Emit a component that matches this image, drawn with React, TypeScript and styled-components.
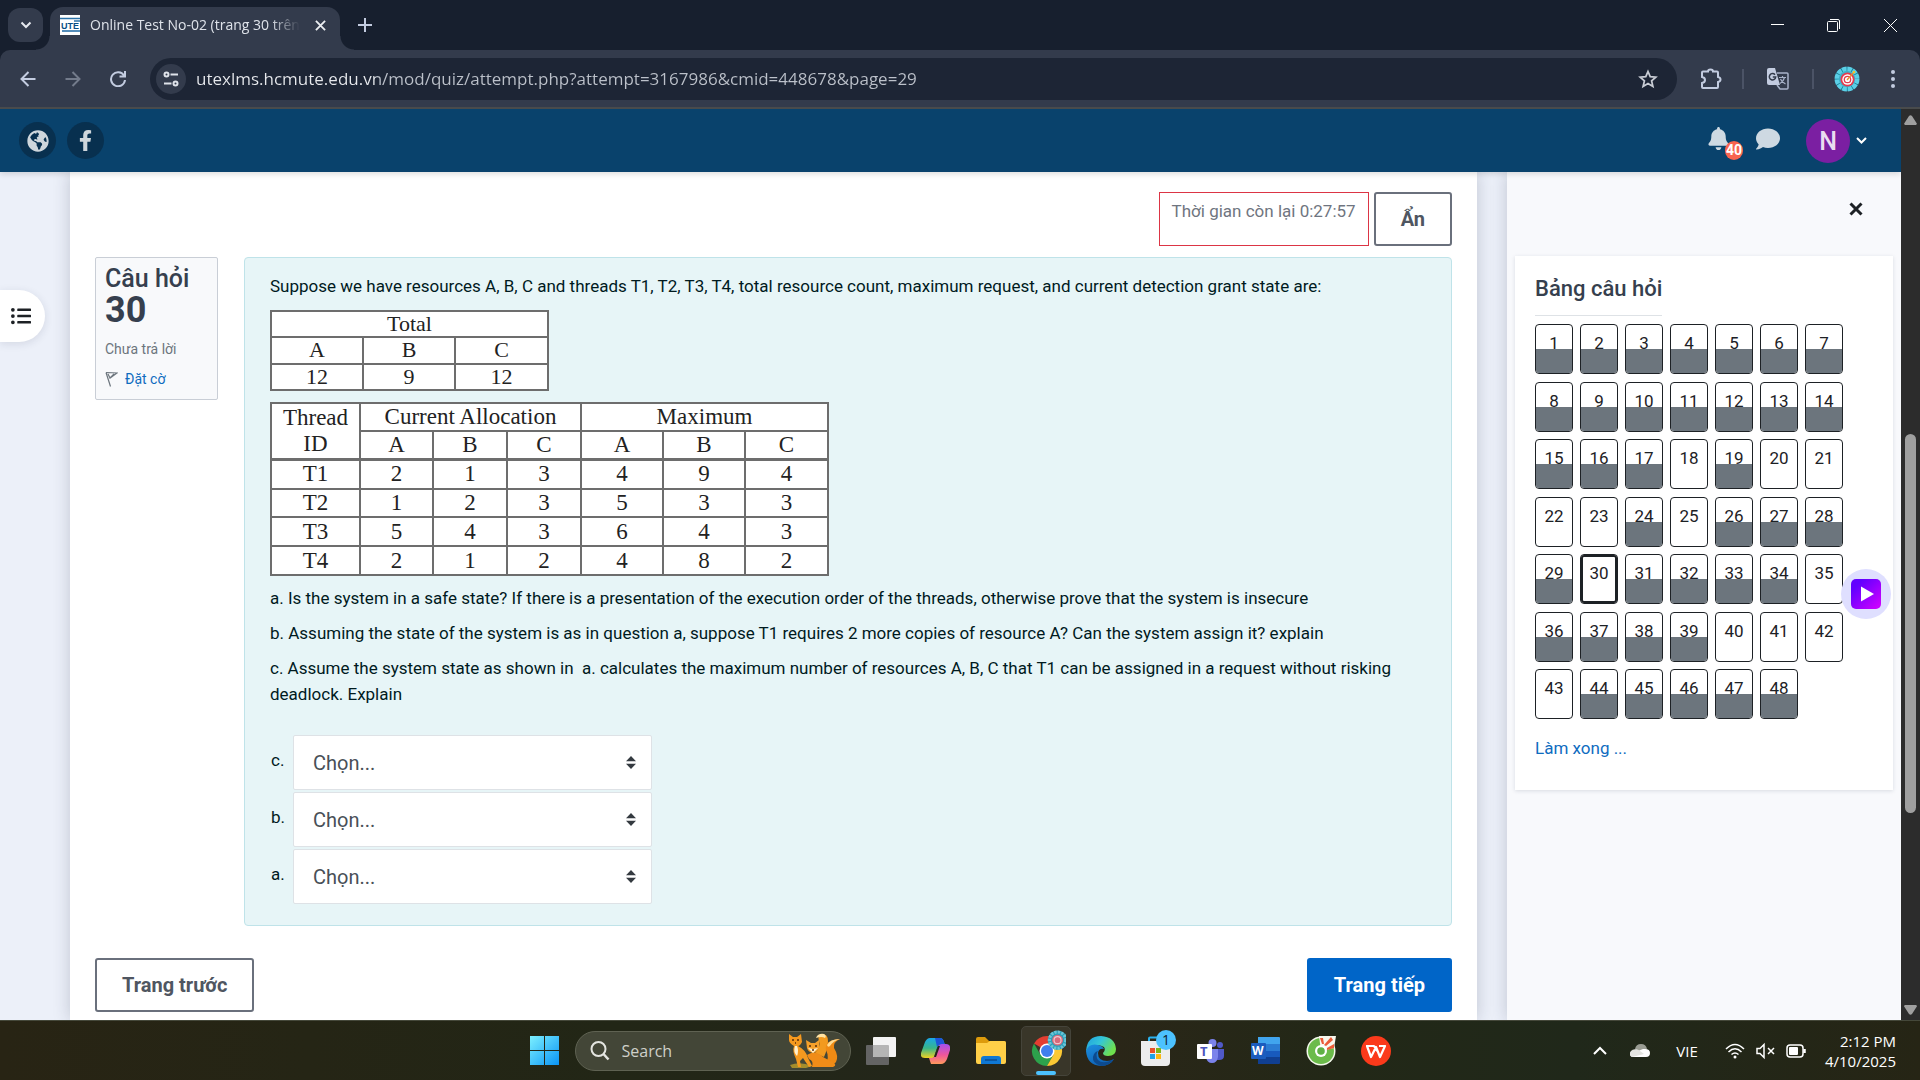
import React from "react";
import styled, { createGlobalStyle, css } from "styled-components";
import {
  FaBell,
  FaComment,
  FaFacebookF,
  FaGlobeAmericas,
  FaListUl,
} from "react-icons/fa";

const uiFont = `"Open Sans", "Noto Sans", sans-serif`;
const pageFont = `Roboto, "Noto Sans", sans-serif`;

const GlobalStyle = createGlobalStyle`
  *, *::before, *::after { box-sizing: border-box; }
  body { margin: 0; overflow: hidden; }
  button, input, select { font-family: inherit; }
  a { text-decoration: none; }
  svg { display: block; flex: none; }
  h2, h3, p { margin: 0; font-weight: 400; }
`;

const Desktop = styled.div`
  display: flex;
  flex-direction: column;
  height: 100vh;
  background: #171f2e;
  font-family: ${uiFont};
`;

/* ---------- browser chrome ---------- */

const TabStrip = styled.header`
  display: flex;
  align-items: center;
  height: 50px;
  padding-left: 8px;
  background: #171f2e;
  color: #dfe3ea;
`;

const TabSearch = styled.button`
  display: grid;
  place-items: center;
  width: 35px;
  height: 34px;
  border: 0;
  border-radius: 12px;
  background: #333b4c;
  color: #e6e9ef;
`;

const Tab = styled.div`
  position: relative;
  display: flex;
  align-items: center;
  align-self: flex-end;
  width: 290px;
  height: 43px;
  margin-left: 7px;
  padding: 0 11px 7px 10px;
  border-radius: 13px 13px 0 0;
  background: #333b4c;

  &::before,
  &::after {
    content: "";
    position: absolute;
    bottom: 0;
    width: 14px;
    height: 14px;
  }
  &::before {
    left: -14px;
    background: radial-gradient(circle at 0 0, transparent 13px, #333b4c 14px);
  }
  &::after {
    right: -14px;
    background: radial-gradient(circle at 100% 0, transparent 13px, #333b4c 14px);
  }
`;

const TabTitle = styled.span`
  flex: 1;
  margin-left: 10px;
  overflow: hidden;
  white-space: nowrap;
  font-size: 14px;
  line-height: 20px;
  mask-image: linear-gradient(90deg, #000 180px, transparent 210px);
`;

const ChromeButton = styled.button<{ $w?: number; $dim?: boolean }>`
  display: grid;
  place-items: center;
  flex: none;
  width: ${(p) => p.$w ?? 45}px;
  height: 36px;
  padding: 0;
  border: 0;
  background: none;
  color: ${(p) => (p.$dim ? "#737b8b" : "#c3cce0")};
`;

const WindowButtons = styled.div`
  display: flex;
  margin-left: auto;
`;

const Toolbar = styled.nav`
  display: flex;
  align-items: center;
  height: 59px;
  padding: 0 5px;
  border-bottom: 2px solid #494b4c;
  border-radius: 10px 10px 0 0;
  background: #333b4c;
`;

const AddressBar = styled.label`
  display: flex;
  align-items: center;
  flex: 1;
  height: 42px;
  margin: 0 11px 0 10px;
  padding: 0 8px 0 6px;
  border-radius: 21px;
  background: #1d2535;
  color: #c9cdd5;
`;

const SiteInfo = styled.button`
  display: grid;
  place-items: center;
  width: 30px;
  height: 30px;
  padding: 0;
  border: 0;
  border-radius: 50%;
  background: #333b4c;
  color: #dfe3ea;
`;

const AddressInput = styled.input`
  flex: 1;
  margin-left: 10px;
  padding: 0;
  border: 0;
  outline: 0;
  color: #dfe3ea;
  background: linear-gradient(90deg, #e8eaee 180px, #bcc1ca 180px) text;
  -webkit-text-fill-color: transparent;
  font-size: 17px;
  line-height: 26px;
`;

const Divider = styled.span`
  width: 2px;
  height: 20px;
  margin: 0 9px;
  background: #4b5366;
`;

/* ---------- viewport ---------- */

const Viewport = styled.div`
  display: flex;
  flex: 1;
  min-height: 0;
  background: #2c2c2c;
`;

const Page = styled.div`
  position: relative;
  display: flex;
  flex-direction: column;
  flex: 1;
  min-width: 0;
  overflow: hidden;
  background: #ecf0f9;
  font-family: ${pageFont};
  font-size: 17px;
  line-height: 26px;
`;

const Scrollbar = styled.div`
  display: flex;
  flex-direction: column;
  align-items: center;
  width: 19px;
  padding: 6px 0 5px;
`;

const ScrollGap = styled.span<{ $grow: number }>`
  flex: ${(p) => p.$grow} 0 0;
`;

const ScrollThumb = styled.span`
  flex: 379 0 0;
  width: 11px;
  border-radius: 6px;
  background: #9f9f9f;
`;

const SiteHeader = styled.header`
  z-index: 2;
  display: flex;
  align-items: center;
  height: 63px;
  flex: none;
  padding: 0 34px 0 19px;
  background: #09426c;
  box-shadow: 0 2px 6px rgba(0, 0, 0, 0.14);
`;

const RoundLink = styled.a`
  display: grid;
  place-items: center;
  width: 37px;
  height: 37px;
  margin-right: 11px;
  border-radius: 50%;
  background: #08304f;
  color: #ced6dc;
`;

const HeaderTools = styled.div`
  display: flex;
  align-items: center;
  margin-left: auto;
`;

const HeaderButton = styled.button`
  position: relative;
  padding: 0 0 4px;
  margin-right: 26px;
  border: 0;
  background: none;
  color: #ced9e2;
`;

const Badge = styled.span`
  position: absolute;
  top: 14px;
  left: 18px;
  width: 18px;
  height: 19px;
  border-radius: 10px;
  background: #f8644f;
  color: #fff;
  font-size: 14px;
  font-weight: 700;
  line-height: 19px;
  text-align: center;
`;

const Avatar = styled.button`
  display: flex;
  align-items: center;
  gap: 6px;
  padding: 0;
  border: 0;
  background: none;
  color: #fff;
`;

const AvatarCircle = styled.span`
  width: 44px;
  height: 44px;
  border-radius: 50%;
  background: #7b1fa2;
  color: #eadcf0;
  font-size: 25px;
  font-weight: 500;
  line-height: 46px;
  text-align: center;
`;

const Columns = styled.div`
  display: flex;
  flex: 1;
  min-height: 0;
`;

const Content = styled.main`
  flex: 1;
  min-width: 0;
  margin: 0 30px 0 70px;
  padding: 20px 25px;
  background: #fff;
  box-shadow: 0 0 16px rgba(30, 40, 70, 0.22);
`;

const DrawerToggle = styled.button`
  position: absolute;
  top: 181px;
  left: 0;
  display: flex;
  align-items: center;
  width: 45px;
  height: 52px;
  padding: 0 0 0 11px;
  border: 0;
  border-radius: 0 26px 26px 0;
  background: #fff;
  box-shadow: 0 2px 8px rgba(30, 40, 70, 0.12);
  color: #1d2125;
`;

const TimerRow = styled.div`
  display: flex;
  justify-content: flex-end;
  gap: 5px;
  margin-bottom: 11px;
`;

const Timer = styled.div`
  padding: 5px 12px;
  border: 1px solid #dc3545;
  color: #6f7580;
`;

const Button = styled.button<{ $primary?: boolean }>`
  height: 54px;
  padding: 0 25px;
  border: 2px solid #6a707c;
  border-radius: 3px;
  background: #fff;
  color: #4f5661;
  font-size: 20px;
  font-weight: 700;

  ${(p) =>
    p.$primary &&
    css`
      border-color: #0065c8;
      background: #0065c8;
      color: #fff;
    `}
`;

const Question = styled.section`
  display: flex;
  align-items: flex-start;
  gap: 26px;
`;

const QuestionInfo = styled.aside`
  width: 123px;
  height: 143px;
  padding: 9px;
  border: 1px solid #c9ced6;
  border-radius: 2px;
  background: #f8f9fb;
  color: #363f4e;
`;

const InfoTitle = styled.h3`
  font-size: 25px;
  font-weight: 500;
  line-height: 24px;
`;

const InfoNumber = styled.span`
  display: block;
  font-size: 36px;
  font-weight: 700;
  line-height: 38px;
`;

const InfoState = styled.div`
  margin-top: 10px;
  color: #6c757d;
  font-size: 14px;
  line-height: 20px;
`;

const FlagLink = styled.a`
  display: flex;
  align-items: center;
  gap: 7px;
  margin-top: 10px;
  color: #0f6cbf;
  font-size: 14px;
  line-height: 20px;
`;

const QuestionBody = styled.div`
  flex: 1;
  min-width: 0;
  padding: 15px 25px 21px;
  border: 1px solid #bfe3e9;
  border-radius: 4px;
  background: #e7f5f7;
  color: #001a1e;
`;

const Paragraph = styled.p`
  margin-bottom: 9px;
  white-space: pre-wrap;
`;

const DataTable = styled.table<{ $height: number; $size: number; $line: number }>`
  table-layout: fixed;
  border-collapse: collapse;
  height: ${(p) => p.$height}px;
  margin: 11px 0 9px;
  border: 2px solid #6d6d6d;
  background: #fff;
  color: #222;
  font-family: "Liberation Serif", serif;
  font-size: ${(p) => p.$size}px;
  line-height: ${(p) => p.$line}px;

  th,
  td {
    padding: 0;
    border: 2px solid #6d6d6d;
    font-weight: 400;
    text-align: center;
  }
`;

const HeadGroup = styled.thead`
  border-bottom: 3px solid #6d6d6d;
`;

const Answers = styled.div`
  display: flex;
  flex-direction: column;
  gap: 2px;
  margin: 28px 0 0 1px;
`;

const Answer = styled.label`
  display: flex;
  align-items: center;
  line-height: 20px;
`;

const AnswerKey = styled.span`
  width: 22px;
  padding-bottom: 6px;
`;

const SelectBox = styled.span`
  display: grid;
  align-items: center;
  width: 359px;

  > * {
    grid-area: 1 / 1;
  }
  > svg {
    justify-self: end;
    margin-right: 16px;
    pointer-events: none;
  }
`;

const Select = styled.select`
  appearance: none;
  width: 100%;
  height: 55px;
  padding: 0 19px;
  border: 1px solid #dee2e6;
  border-radius: 2px;
  background: #fff;
  color: #495057;
  font-size: 20px;
`;

const PageNav = styled.div`
  display: flex;
  justify-content: space-between;
  margin-top: 32px;
`;

/* ---------- right drawer ---------- */

const Drawer = styled.aside`
  display: flex;
  flex-direction: column;
  width: 394px;
  padding: 20px 8px;
  background: #f8f9fc;
  box-shadow: 0 0 16px rgba(30, 40, 70, 0.22);
`;

const DrawerClose = styled.button`
  display: grid;
  place-items: center;
  align-self: flex-end;
  width: 34px;
  height: 34px;
  margin: 0 20px 30px 0;
  padding: 0;
  border: 0;
  background: none;
  color: #1d2125;
`;

const Card = styled.section`
  padding: 20px 20px 29px;
  background: #fff;
  box-shadow: 0 1px 4px rgba(30, 40, 70, 0.14);
`;

const CardTitle = styled.h2`
  display: inline-block;
  padding-bottom: 13px;
  border-bottom: 1px solid #dee2e6;
  color: #363f4e;
  font-size: 22px;
  font-weight: 500;
  line-height: 26px;
  vertical-align: top;
`;

const QuestionGrid = styled.div`
  display: grid;
  grid-template-columns: repeat(7, 38px);
  align-content: space-between;
  column-gap: 7px;
  height: 395px;
  margin: 8px 0 16px;
`;

const QuestionCell = styled.a<{ $done: boolean; $current: boolean }>`
  position: relative;
  height: 50px;
  padding-top: 5px;
  overflow: hidden;
  border: 1px solid #1d2125;
  border-radius: 4px;
  background: #fff;
  color: #1d2125;
  text-align: center;

  ${(p) =>
    p.$current &&
    css`
      box-shadow: inset 0 0 0 2px #1d2125;
    `}
  ${(p) =>
    p.$done &&
    css`
      &::after {
        content: "";
        position: absolute;
        inset: 50% 0 0;
        background: #6c757d;
      }
    `}
`;

const FinishLink = styled.a`
  display: block;
  color: #0f6cbf;
`;

const PlayButton = styled.button`
  position: absolute;
  top: 460px;
  right: 10px;
  z-index: 3;
  display: grid;
  place-items: center;
  width: 50px;
  height: 50px;
  padding: 0;
  border: 0;
  border-radius: 50%;
  background: #dfdfff;
`;

/* ---------- taskbar ---------- */

const Taskbar = styled.footer`
  display: grid;
  grid-template-columns: 1fr auto 1fr;
  align-items: center;
  height: 60px;
  flex: none;
  border-top: 1px solid #45483a;
  background: linear-gradient(90deg, #282414, #222616 32%, #23261a 48%, #2b2618 57%, #222817 70%, #20281a 82%, #262515);
  color: #fff;
`;

const TaskItems = styled.div`
  grid-column: 2;
  display: flex;
  align-items: center;
  gap: 5px;
`;

const TaskButton = styled.button<{ $active?: boolean }>`
  position: relative;
  display: grid;
  place-items: center;
  width: 50px;
  height: 50px;
  padding: 0;
  border: 1px solid ${(p) => (p.$active ? "#45443a" : "transparent")};
  border-radius: 5px;
  background: ${(p) => (p.$active ? "#393629" : "none")};

  ${(p) =>
    p.$active &&
    css`
      &::after {
        content: "";
        position: absolute;
        bottom: 0;
        width: 20px;
        height: 4px;
        border-radius: 2px;
        background: #4cc2ff;
      }
    `}
`;

const SearchBox = styled.label`
  display: flex;
  align-items: center;
  gap: 12px;
  width: 276px;
  height: 40px;
  padding: 0 10px 0 14px;
  border: 1px solid #5f6252;
  border-radius: 20px;
  background: #434637;
`;

const SearchInput = styled.input`
  flex: 1;
  min-width: 0;
  padding: 0;
  border: 0;
  outline: 0;
  background: none;
  color: #fff;
  font-size: 16px;

  &::placeholder {
    color: #cfd0c9;
    opacity: 1;
  }
`;

const Tray = styled.div`
  grid-column: 3;
  display: flex;
  align-items: center;
  justify-content: flex-end;
  padding-right: 24px;
  font-size: 15px;
`;

const TrayItem = styled.button<{ $w: number }>`
  display: grid;
  place-items: center;
  width: ${(p) => p.$w}px;
  height: 40px;
  padding: 0;
  border: 0;
  background: none;
  color: #fff;
  font-size: 15px;
`;

const Clock = styled.time`
  width: 80px;
  line-height: 20px;
  text-align: right;
`;

/* ---------- icons ---------- */

type LineProps = { size: number; box: string; w?: number; children: React.ReactNode };

const Line = ({ size, box, w = 2, children }: LineProps) => (
  <svg
    width={size}
    height={size}
    viewBox={box}
    fill="none"
    stroke="currentColor"
    strokeWidth={w}
    aria-hidden="true"
  >
    {children}
  </svg>
);

const SchoolLogo = () => (
  <svg width="20" height="20" viewBox="0 0 20 20" aria-hidden="true">
    <rect width="20" height="20" fill="#fff" />
    <path d="M0 3.500h20M14 6h6" stroke="#2a72a8" strokeWidth="1.500" />
    <text x="1" y="14" fill="#0a4f86" fontFamily="'Liberation Sans'" fontSize="9" fontWeight="700">
      UTE
    </text>
    <path d="M2 16h18" stroke="#1b67a3" strokeWidth="1.500" />
  </svg>
);

const ProfileBadge = ({ size }: { size: number }) => (
  <svg width={size} height={size} viewBox="0 0 26 26" aria-hidden="true">
    <circle cx="13" cy="13" r="12" fill="#0f7d93" />
    <circle cx="13" cy="13" r="10" fill="none" stroke="#5ccfe6" strokeWidth="5" strokeDasharray="4.500 0.740" />
    <circle cx="13" cy="13" r="8" fill="#3fb3cc" />
    <circle cx="13.500" cy="13.500" r="7" fill="#e33b4f" />
    <circle cx="13.500" cy="13.500" r="5.200" fill="#fff" />
    <circle cx="13.500" cy="13.500" r="3.200" fill="none" stroke="#e33b4f" strokeWidth="1.300" />
    <path d="M13 14l7-8" stroke="#e8912d" strokeWidth="1.300" />
    <circle cx="20" cy="6" r="1.300" fill="#f2c431" />
  </svg>
);

const TranslateIcon = () => (
  <svg width="22" height="22" viewBox="0 0 22 22" aria-hidden="true">
    <path d="M10 5h10q1 0 1 1v14q0 1-1 1h-7l-3-4" fill="none" stroke="#a9b3c9" strokeWidth="1.500" />
    <path d="M12 9.500h7M15.500 8v1.500M17.500 9.500q-1 4-4.500 6M13.500 11q1 3 5 5" fill="none" stroke="#a9b3c9" strokeWidth="1.200" />
    <path d="M2 0h6l5 17H2q-2 0-2-2V2q0-2 2-2z" fill="#c3cce0" />
    <path d="M8 6.800A3.200 3.200 0 1 0 8.700 9H5.800" fill="none" stroke="#333b4c" strokeWidth="1.500" />
  </svg>
);

const FlagIcon = () => (
  <svg width="13" height="16" viewBox="0 0 13 16" fill="none" stroke="#6c757d" aria-hidden="true">
    <path d="M1 1.500l11 .5-7.500 5.500M1 1.500L5.500 15.500M3 3l2 4 4-4" strokeWidth="1.200" />
  </svg>
);

const CaretPair = () => (
  <svg width="10" height="13" viewBox="0 0 10 13" aria-hidden="true">
    <path d="M5 0l5 5.200H0zM5 13l5-5.200H0z" fill="#343a40" />
  </svg>
);

const WindowsIcon = () => (
  <svg width="29" height="29" viewBox="0 0 29 29" aria-hidden="true">
    <defs>
      <linearGradient id="win" x1="0" y1="0" x2="1" y2="1" gradientUnits="objectBoundingBox">
        <stop stopColor="#7cf0ff" />
        <stop offset="1" stopColor="#0a94f5" />
      </linearGradient>
    </defs>
    <path d="M0 0h14v14H0zM15 0h14v14H15zM0 15h14v14H0zM15 15h14v14H15z" fill="url(#win)" />
  </svg>
);

const FoxIcon = () => (
  <svg width="52" height="36" viewBox="0 0 52 36" aria-hidden="true">
    <path d="M2 32q10-4 22 1l-6 2H4z" fill="#a58d2c" />
    <path d="M27 20Q33 14 31 8 29 3 34 1q6 0 6 7 0 7-4 16z" fill="#f29a1f" />
    <path d="M36 1q-6-1-8 4 6-2 9 0 2-2-1-4z" fill="#ffe3a4" />
    <path d="M37 31Q42 25 38 17q-2-10 14-11-7 3-6 9 5 8 2 14-5 6-12 4z" fill="#ef8a14" />
    <path d="M52 6q-10 0-13 6 1 3 3 1 3-5 10-7z" fill="#ffdd94" />
    <path d="M19 22q8-6 16 2l9 5q6 3 1 5H24q2-6-3-8z" fill="#f08c18" />
    <path d="M1 1l4 3 4 0 4-3 1 8q-2 4-4 4 8 4 10 12l4 8-3 1-6-9-3 3 1 6h-3l-2-8Q4 18 6 13q-5-3-5-6z" fill="#f5991f" />
    <path d="M7 13q-2 6 2 10 2-5 0-10z" fill="#fff0cf" />
    <path d="M18 7l5 3h4l4-3v8q-2 4-6 5-5-1-6-5z" fill="#f5a02a" />
    <path d="M20 15l5 1 5-1-5 5z" fill="#fff0cf" />
    <path d="M4 7h2M9 7h2M21 13h2M27 13h2M7 10h1M24 17h2" stroke="#5a2c0a" strokeWidth="1.300" />
  </svg>
);

const TaskViewIcon = () => (
  <svg width="30" height="28" viewBox="0 0 30 28" aria-hidden="true">
    <rect y="8" width="23" height="20" rx="1" fill="#646464" />
    <rect x="7" width="23" height="20" rx="1" fill="#f3f3f3" />
    <path d="M7 8h15q1 0 1 1v11H8q-1 0-1-1z" fill="#b5b5b5" />
  </svg>
);

const CopilotIcon = () => (
  <svg width="29" height="26" viewBox="0 0 29 26" aria-hidden="true">
    <defs>
      <linearGradient id="cpA" x1="0" y1="0" x2="0" y2="1">
        <stop stopColor="#1aa7e8" />
        <stop offset="0.500" stopColor="#38b58a" />
        <stop offset="1" stopColor="#f7d21e" />
      </linearGradient>
      <linearGradient id="cpB" x1="0" y1="0" x2="0" y2="1">
        <stop stopColor="#a34ff0" />
        <stop offset="0.550" stopColor="#f0569a" />
        <stop offset="1" stopColor="#ff9a5c" />
      </linearGradient>
    </defs>
    <path d="M9 0h10q3 0 4 4l1 3h-5q-2 0-3 3l-3 9q-1 2-4 1H4q-5 0-4-5L4 4q2-4 5-4z" fill="url(#cpA)" />
    <path d="M14 0h5q3 0 4 4l1 3h-5q-2 0-3 2z" fill="#1c55d8" />
    <path d="M20 26H10l-2-6h3q2 0 3-3l3-8q1-3 4-3h4q5 0 4 6l-3 9q-2 5-6 5z" fill="url(#cpB)" />
    <path d="M13 19l4-11 2 0-4 11z" fill="#25261a" />
  </svg>
);

const FolderIcon = () => (
  <svg width="30" height="27" viewBox="0 0 30 27" aria-hidden="true">
    <path d="M0 2q0-2 2-2h7l4 4h15q2 0 2 2v6H0z" fill="#dd9b0c" />
    <path d="M0 6h11l3-2h14q2 0 2 2v19q0 2-2 2H2q-2 0-2-2z" fill="#ffcf48" />
    <path d="M5 27v-5q0-3 3-3h14q3 0 3 3v5z" fill="#0f78d4" />
    <path d="M9 23h12" stroke="#0b4d92" strokeWidth="1.500" />
  </svg>
);

const ChromeIcon = () => (
  <svg width="40" height="44" viewBox="-3 -1 40 44" aria-hidden="true">
    <path d="M18 21L5 13.500A15 15 0 0 1 31 13.500H18z" fill="#e33e31" />
    <path d="M5 13.500A15 15 0 0 0 18 36l6.500-11.300L11.500 24.700z" fill="#2da24c" />
    <path d="M18 36A15 15 0 0 0 31 13.500H18l6.500 11.200z" fill="#fcc934" />
    <circle cx="18" cy="21" r="7.500" fill="#fff" />
    <circle cx="18" cy="21" r="6" fill="#3f7fee" />
    <g transform="translate(18.400 0) scale(.78)">
      <circle cx="13" cy="13" r="12.500" fill="#2a9fb8" />
      <circle cx="13" cy="13" r="10.500" fill="none" stroke="#6bc5d6" strokeWidth="4" strokeDasharray="3 1.500" />
      <circle cx="13" cy="13" r="7" fill="#d9697b" />
      <circle cx="13" cy="13" r="4.500" fill="none" stroke="#f0c8cd" strokeWidth="1.500" />
    </g>
  </svg>
);

const EdgeIcon = () => (
  <svg width="30" height="30" viewBox="0 0 30 30" aria-hidden="true">
    <defs>
      <linearGradient id="edgeTop" x1="0" y1="0" x2="1" y2="0.500">
        <stop stopColor="#1f9ee0" />
        <stop offset="0.500" stopColor="#34c6d8" />
        <stop offset="1" stopColor="#6fe04e" />
      </linearGradient>
      <linearGradient id="edgeLow" x1="0" y1="0" x2="0.500" y2="1">
        <stop stopColor="#1c8fe0" />
        <stop offset="1" stopColor="#0f62b5" />
      </linearGradient>
    </defs>
    <path d="M0 15Q1 0 15 0q14 1 15 13 0 7-8 7-5 0-5-3 3-3 1-6-8-5-18 4z" fill="url(#edgeTop)" />
    <path d="M0 15q3-8 12-6 5 1 6 4-5-1-6 4 0 8 9 8 4 0 7-2-4 7-13 7Q1 29 0 15z" fill="url(#edgeLow)" />
    <path d="M12 15q-3 4 0 9 5 5 16-1-4 7-13 7-9-3-8-9 1-5 5-6z" fill="#0d4a8e" />
  </svg>
);

const StoreIcon = () => (
  <svg width="40" height="44" viewBox="-1 -3 40 44" aria-hidden="true">
    <path d="M12 9V6.500q0-1 1-1h10" fill="none" stroke="#2ab2ee" strokeWidth="2" />
    <path d="M4 9h29v21q0 4-4 4H8q-4 0-4-4z" fill="#ececec" />
    <path d="M13 16h5v5h-5z" fill="#e8502a" />
    <path d="M19 16h5v5h-5z" fill="#7cb518" />
    <path d="M13 22h5v5h-5z" fill="#1da1e8" />
    <path d="M19 22h5v5h-5z" fill="#fbb813" />
    <circle cx="29" cy="8" r="10" fill="#4cc2ff" />
    <text x="25" y="13" fill="#10242f" fontFamily="'Open Sans'" fontSize="14">
      1
    </text>
  </svg>
);

const TeamsIcon = () => (
  <svg width="28" height="24" viewBox="0 0 28 24" aria-hidden="true">
    <circle cx="23" cy="6" r="3" fill="#5059c9" />
    <path d="M18 10h9v7q0 4-5 4h-4z" fill="#5059c9" />
    <circle cx="15.500" cy="4" r="4" fill="#7b83eb" />
    <path d="M11 10h10v8q-1 6-6 6t-6-6z" fill="#7b83eb" />
    <rect y="5" width="15" height="15" rx="1" fill="#fff" />
    <text x="3" y="17" fill="#4b53bc" fontFamily="'Open Sans'" fontSize="13" fontWeight="700">
      T
    </text>
  </svg>
);

const WordIcon = () => (
  <svg width="29" height="27" viewBox="0 0 29 27" aria-hidden="true">
    <path d="M7 0h21q1 0 1 1v6H7z" fill="#41a5ee" />
    <path d="M7 7h22v7H7z" fill="#2b7cd3" />
    <path d="M7 14h22v6H7z" fill="#185abd" />
    <path d="M7 20h22v6q0 1-1 1H7z" fill="#103f91" />
    <rect y="6" width="15" height="16" rx="1" fill="#1b5cbe" />
    <text x="1" y="18" fill="#fff" fontFamily="'Open Sans'" fontSize="12" fontWeight="700">
      W
    </text>
  </svg>
);

const CocCocIcon = () => (
  <svg width="30" height="30" viewBox="0 0 30 30" aria-hidden="true">
    <circle cx="15" cy="15" r="14.500" fill="#f4f8ec" />
    <circle cx="15" cy="15" r="13" fill="#6bbb4a" />
    <path d="M15 15L13 0h17l-2 12z" fill="#f9f7ee" />
    <path d="M14 2l2 6 2 0-1-6zM25 1l-7 8 2 1 7-6zM28 8l-7 4 0 2 7-2z" fill="#ec5b38" />
    <circle cx="15" cy="15" r="6" fill="#fff" />
    <circle cx="15" cy="15" r="3.800" fill="#5fb146" />
  </svg>
);

const WpsIcon = () => (
  <svg width="30" height="30" viewBox="0 0 30 30" aria-hidden="true">
    <circle cx="15" cy="15" r="15" fill="#fb3a1b" />
    <path d="M5 10h8l3 5M6 10l4 11 5-10 4 10 5-11h-6" fill="none" stroke="#fff" strokeWidth="2.200" strokeLinejoin="round" />
  </svg>
);

/* ---------- data ---------- */

const unanswered = new Set([18, 20, 21, 22, 23, 25, 30, 35, 40, 41, 42, 43]);
const questions = Array.from({ length: 48 }, (_, i) => i + 1);
const threads: [string, number[]][] = [
  ["T1", [2, 1, 3, 4, 9, 4]],
  ["T2", [1, 2, 3, 5, 3, 3]],
  ["T3", [5, 4, 3, 6, 4, 3]],
  ["T4", [2, 1, 2, 4, 8, 2]],
];
const threadColumns = [89, 73, 74, 74, 82, 82, 83];

const BrowserChrome = () => (
  <>
    <TabStrip>
      <TabSearch aria-label="Search tabs">
        <Line size={12} box="0 0 12 12" w={2}>
          <path d="M1.500 3.500L6 8l4.500-4.500" />
        </Line>
      </TabSearch>
      <Tab>
        <SchoolLogo />
        <TabTitle>Online Test No-02 (trang 30 trên</TabTitle>
        <ChromeButton $w={18} aria-label="Close tab">
          <Line size={11} box="0 0 12 12">
            <path d="M1 1l10 10M11 1L1 11" stroke="#eceef2" />
          </Line>
        </ChromeButton>
      </Tab>
      <ChromeButton $w={50} aria-label="New tab">
        <Line size={14} box="0 0 14 14">
          <path d="M7 0v14M0 7h14" />
        </Line>
      </ChromeButton>
      <WindowButtons>
        <ChromeButton $w={56} aria-label="Minimize">
          <Line size={13} box="0 0 13 13" w={1}>
            <path d="M0 5.500h13" stroke="#fff" />
          </Line>
        </ChromeButton>
        <ChromeButton $w={56} aria-label="Restore">
          <Line size={13} box="0 0 13 13" w={1}>
            <path d="M.5 3.500q0-1 1-1h8q1 0 1 1v8q0 1-1 1h-8q-1 0-1-1zM3 .5h8q1.500 0 1.500 1.500v8" stroke="#fff" />
          </Line>
        </ChromeButton>
        <ChromeButton $w={59} aria-label="Close">
          <Line size={13} box="0 0 13 13" w={1}>
            <path d="M0 0l13 13M13 0L0 13" stroke="#fff" />
          </Line>
        </ChromeButton>
      </WindowButtons>
    </TabStrip>
    <Toolbar>
      <ChromeButton aria-label="Back">
        <Line size={16} box="0 0 16 16">
          <path d="M15.500 8H1.500M8.500 1L1.500 8l7 7" />
        </Line>
      </ChromeButton>
      <ChromeButton $dim aria-label="Forward">
        <Line size={16} box="0 0 16 16">
          <path d="M.5 8h14M7.500 1l7 7-7 7" />
        </Line>
      </ChromeButton>
      <ChromeButton aria-label="Reload">
        <Line size={16} box="0 0 16 16">
          <path d="M14 4.500A7 7 0 1 0 15 9M15 0v5.500H9.500" />
        </Line>
      </ChromeButton>
      <AddressBar>
        <SiteInfo aria-label="Site information">
          <Line size={16} box="0 0 16 16">
            <circle cx="3.500" cy="3.500" r="2" />
            <path d="M7.500 3.500H15M1 12.500h7.500" />
            <circle cx="12.500" cy="12.500" r="2" />
          </Line>
        </SiteInfo>
        <AddressInput
          aria-label="Address"
          defaultValue="utexlms.hcmute.edu.vn/mod/quiz/attempt.php?attempt=3167986&cmid=448678&page=29"
        />
        <ChromeButton $w={42} aria-label="Bookmark">
          <Line size={20} box="0 0 20 20" w={1.75}>
            <path d="M10 2.500l2.200 5.200 5.600.5-4.200 3.700 1.300 5.500L10 14.500l-4.900 2.900 1.300-5.500L2.200 8.200l5.600-.5z" stroke="#c9cdd5" />
          </Line>
        </ChromeButton>
      </AddressBar>
      <ChromeButton aria-label="Extensions">
        <Line size={22} box="0 0 22 22">
          <path d="M3 3.500h5q0-2 2.500-2t2.500 2h4q1 0 1 1V9q2.500.5 2.500 2.500T18 14v5q0 1-1 1H3q-1 0-1-1v-4q3-.5 3-3T2 9V4.500q0-1 1-1z" />
        </Line>
      </ChromeButton>
      <Divider />
      <ChromeButton $w={50} aria-label="Translate">
        <TranslateIcon />
      </ChromeButton>
      <Divider />
      <ChromeButton $w={48} aria-label="Profile">
        <ProfileBadge size={26} />
      </ChromeButton>
      <ChromeButton $w={44} aria-label="Menu">
        <Line size={20} box="0 0 20 20" w={0}>
          <g fill="currentColor">
            <circle cx="10" cy="3" r="2" />
            <circle cx="10" cy="10" r="2" />
            <circle cx="10" cy="17" r="2" />
          </g>
        </Line>
      </ChromeButton>
    </Toolbar>
  </>
);

const Header = () => (
  <SiteHeader>
    <RoundLink href="#" aria-label="Website">
      <FaGlobeAmericas size={22} />
    </RoundLink>
    <RoundLink href="#" aria-label="Facebook">
      <FaFacebookF size={21} />
    </RoundLink>
    <HeaderTools>
      <HeaderButton aria-label="Notifications">
        <FaBell size={23} />
        <Badge>40</Badge>
      </HeaderButton>
      <HeaderButton aria-label="Messages">
        <FaComment size={24} />
      </HeaderButton>
      <Avatar aria-label="User menu">
        <AvatarCircle>N</AvatarCircle>
        <Line size={11} box="0 0 11 11">
          <path d="M1 3l4.500 4.500L10 3" />
        </Line>
      </Avatar>
    </HeaderTools>
  </SiteHeader>
);

const TotalTable = () => (
  <DataTable $height={81} $size={22} $line={24}>
    <colgroup>
      <col width="92" />
      <col width="92" />
      <col width="93" />
    </colgroup>
    <tbody>
      <tr>
        <th colSpan={3}>Total</th>
      </tr>
      <tr>
        <th>A</th>
        <th>B</th>
        <th>C</th>
      </tr>
      <tr>
        <td>12</td>
        <td>9</td>
        <td>12</td>
      </tr>
    </tbody>
  </DataTable>
);

const ThreadTable = () => (
  <DataTable $height={174} $size={23} $line={26}>
    <colgroup>
      {threadColumns.map((w, i) => (
        <col key={i} width={w} />
      ))}
    </colgroup>
    <HeadGroup>
      <tr>
        <th rowSpan={2}>
          Thread
          <br />
          ID
        </th>
        <th colSpan={3}>Current Allocation</th>
        <th colSpan={3}>Maximum</th>
      </tr>
      <tr>
        {["A", "B", "C", "A", "B", "C"].map((n, i) => (
          <th key={i}>{n}</th>
        ))}
      </tr>
    </HeadGroup>
    <tbody>
      {threads.map(([name, values]) => (
        <tr key={name}>
          <th>{name}</th>
          {values.map((v, i) => (
            <td key={i}>{v}</td>
          ))}
        </tr>
      ))}
    </tbody>
  </DataTable>
);

const Quiz = () => (
  <Content>
    <TimerRow>
      <Timer>Thời gian còn lại 0:27:57</Timer>
      <Button>Ẩn</Button>
    </TimerRow>
    <Question>
      <QuestionInfo>
        <InfoTitle>
          Câu hỏi <InfoNumber>30</InfoNumber>
        </InfoTitle>
        <InfoState>Chưa trả lời</InfoState>
        <FlagLink href="#">
          <FlagIcon />
          Đặt cờ
        </FlagLink>
      </QuestionInfo>
      <QuestionBody>
        <p>
          Suppose we have resources A, B, C and threads T1, T2, T3, T4, total resource count, maximum request, and
          current detection grant state are:
        </p>
        <TotalTable />
        <ThreadTable />
        <Paragraph>
          a. Is the system in a safe state? If there is a presentation of the execution order of the threads, otherwise
          prove that the system is insecure
        </Paragraph>
        <Paragraph>
          b. Assuming the state of the system is as in question a, suppose T1 requires 2 more copies of resource A? Can
          the system assign it? explain
        </Paragraph>
        <Paragraph>
          {"c. Assume the system state as shown in  a. calculates the maximum number of resources A, B, C that T1 can be assigned in a request without risking deadlock. Explain"}
        </Paragraph>
        <Answers>
          {["c.", "b.", "a."].map((key) => (
            <Answer key={key}>
              <AnswerKey>{key}</AnswerKey>
              <SelectBox>
                <Select>
                  <option>Chọn...</option>
                </Select>
                <CaretPair />
              </SelectBox>
            </Answer>
          ))}
        </Answers>
      </QuestionBody>
    </Question>
    <PageNav>
      <Button>Trang trước</Button>
      <Button $primary>Trang tiếp</Button>
    </PageNav>
  </Content>
);

const NavigationDrawer = () => (
  <Drawer>
    <DrawerClose aria-label="Close drawer">
      <Line size={14} box="0 0 14 14" w={3}>
        <path d="M1.500 1.500l11 11M12.500 1.500l-11 11" />
      </Line>
    </DrawerClose>
    <Card>
      <CardTitle>Bảng câu hỏi</CardTitle>
      <QuestionGrid>
        {questions.map((n) => (
          <QuestionCell key={n} href="#" $done={!unanswered.has(n)} $current={n === 30}>
            {n}
          </QuestionCell>
        ))}
      </QuestionGrid>
      <FinishLink href="#">Làm xong ...</FinishLink>
    </Card>
  </Drawer>
);

const SystemTaskbar = () => (
  <Taskbar>
    <TaskItems>
      <TaskButton aria-label="Start">
        <WindowsIcon />
      </TaskButton>
      <SearchBox>
        <Line size={20} box="0 0 20 20">
          <circle cx="8.500" cy="8" r="7" stroke="#e4e5e0" />
          <path d="M13.500 13l5 5.500" stroke="#e4e5e0" strokeWidth="2.500" />
        </Line>
        <SearchInput aria-label="Search" placeholder="Search" />
        <FoxIcon />
      </SearchBox>
      <TaskButton aria-label="Task view">
        <TaskViewIcon />
      </TaskButton>
      <TaskButton aria-label="Copilot">
        <CopilotIcon />
      </TaskButton>
      <TaskButton aria-label="File Explorer">
        <FolderIcon />
      </TaskButton>
      <TaskButton $active aria-label="Chrome">
        <ChromeIcon />
      </TaskButton>
      <TaskButton aria-label="Edge">
        <EdgeIcon />
      </TaskButton>
      <TaskButton aria-label="Store">
        <StoreIcon />
      </TaskButton>
      <TaskButton aria-label="Teams">
        <TeamsIcon />
      </TaskButton>
      <TaskButton aria-label="Word">
        <WordIcon />
      </TaskButton>
      <TaskButton aria-label="Cốc Cốc">
        <CocCocIcon />
      </TaskButton>
      <TaskButton aria-label="WPS Office">
        <WpsIcon />
      </TaskButton>
    </TaskItems>
    <Tray>
      <TrayItem $w={40} aria-label="Hidden icons">
        <Line size={14} box="0 0 14 14">
          <path d="M1 10l6-6 6 6" />
        </Line>
      </TrayItem>
      <TrayItem $w={40} aria-label="OneDrive">
        <svg width="20" height="14" viewBox="0 0 20 14" aria-hidden="true">
          <path d="M5 5q1-5 6-5 5 0 6 5l-5 3-8 1-3-1q1-3 4-3z" fill="#9a9c93" />
          <path d="M3 13q-3 0-3-3t4-4l4 1 5-2h2q5 0 5 4t-4 4z" fill="#fff" />
          <path d="M4 6q3-2 6 1l4 3-12 3q-2-1-2-3 0-4 4-4z" fill="#e3e4e0" />
        </svg>
      </TrayItem>
      <TrayItem $w={54}>VIE</TrayItem>
      <TrayItem $w={42} aria-label="Wi-Fi">
        <Line size={20} box="0 0 20 20" w={1.5}>
          <path d="M1 8q9-9 18 0M3.500 11q6.500-6.500 13 0M6.500 13.500q3.500-3 7 0" />
          <circle cx="10" cy="16" r="1.500" fill="currentColor" stroke="none" />
        </Line>
      </TrayItem>
      <TrayItem $w={20} aria-label="Volume muted">
        <Line size={20} box="0 0 20 20" w={1.5}>
          <path d="M1 7.500h3l4-4v13l-4-4H1zM12 7l6 6M18 7l-6 6" />
        </Line>
      </TrayItem>
      <TrayItem $w={40} aria-label="Battery">
        <Line size={20} box="0 0 20 20" w={1.5}>
          <rect x="1" y="4" width="16" height="12" rx="3" />
          <rect x="3" y="6" width="9" height="8" rx="1" fill="currentColor" stroke="none" />
          <path d="M18.500 8v4" strokeWidth="2.500" />
        </Line>
      </TrayItem>
      <Clock>
        2:12 PM
        <br />
        4/10/2025
      </Clock>
    </Tray>
  </Taskbar>
);

const ScrollArrow = ({ down }: { down?: boolean }) => (
  <svg width="13" height="10" viewBox="0 0 13 10" aria-hidden="true">
    <path
      d={down ? "M1 0h11q1.500 1 .5 2L8 9q-1.500 1.500-3 0L.5 2Q-.5 1 1 0z" : "M1 10h11q1.500-1 .5-2L8 1q-1.500-1.500-3 0L.5 8q-1 1 .5 2z"}
      fill="#9f9f9f"
    />
  </svg>
);

export default function App() {
  return (
    <Desktop>
      <GlobalStyle />
      <BrowserChrome />
      <Viewport>
        <Page>
          <Header />
          <Columns>
            <Quiz />
            <NavigationDrawer />
          </Columns>
          <DrawerToggle aria-label="Open course index">
            <FaListUl size={20} />
          </DrawerToggle>
          <PlayButton aria-label="Play">
            <svg width="30" height="30" viewBox="0 0 30 30" aria-hidden="true">
              <defs>
                <linearGradient id="play" x1="0" y1="0" x2="1" y2="1">
                  <stop offset="0.200" stopColor="#6200ff" />
                  <stop offset="0.900" stopColor="#c800ff" />
                </linearGradient>
              </defs>
              <rect width="30" height="30" rx="5" fill="url(#play)" />
              <path d="M10 7.500L23 15l-13 7.500z" fill="#fff" />
            </svg>
          </PlayButton>
        </Page>
        <Scrollbar>
          <ScrollArrow />
          <ScrollGap $grow={309} />
          <ScrollThumb />
          <ScrollGap $grow={192} />
          <ScrollArrow down />
        </Scrollbar>
      </Viewport>
      <SystemTaskbar />
    </Desktop>
  );
}
